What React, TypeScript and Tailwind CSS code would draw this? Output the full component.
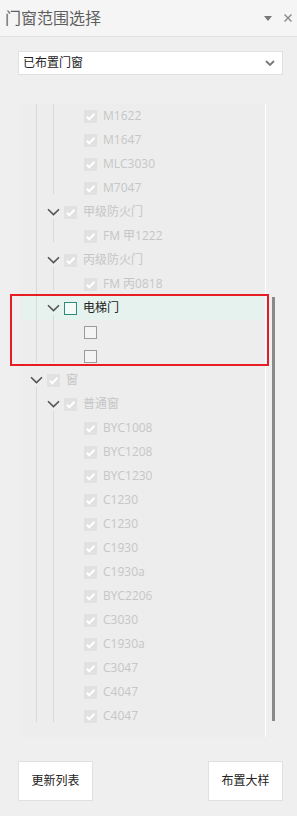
import React from "react";

type Item = { label: string; checked?: boolean };

const Chevron = () => (
  <svg width="13" height="8" viewBox="0 0 13 8" className="shrink-0">
    <path d="M1 1.2 L6.5 6.6 L12 1.2" fill="none" stroke="#555" strokeWidth="1.6" />
  </svg>
);

const Check = ({ state }: { state: "done" | "empty" | "active" }) => {
  if (state === "done")
    return (
      <span className="w-[13px] h-[13px] bg-[#e1e1e1] flex items-center justify-center shrink-0">
        <svg width="13" height="13" viewBox="0 0 13 13">
          <path d="M2.8 6.8 L5.3 9.3 L10.4 3.8" fill="none" stroke="#fff" strokeWidth="2" />
        </svg>
      </span>
    );
  if (state === "active")
    return <span className="block w-[13px] h-[13px] border border-[#2b8c7c] bg-[#f4faf8] shrink-0" />;
  return <span className="block w-[13px] h-[13px] border border-[#9a9a9a] bg-[#f4f4f4] shrink-0" />;
};

const Leaf = ({ item }: { item: Item }) => (
  <div className="h-6 flex items-center pl-[62px]">
    <Check state={item.checked === false ? "empty" : "done"} />
    <span className="ml-[6px] text-[12px] text-[#c6c6c6]">{item.label}</span>
  </div>
);

const Node = ({
  label,
  level,
  active,
}: {
  label: string;
  level: 1 | 2;
  active?: boolean;
}) => (
  <div
    className={`h-6 flex items-center ${level === 1 ? "pl-[8px]" : "pl-[25px]"} ${
      active ? "bg-[#e6f2ee]" : ""
    }`}
  >
    <Chevron />
    <span className="ml-[4px] flex">
      <Check state={active ? "active" : "done"} />
    </span>
    <span
      className={`ml-[6px] text-[12px] ${active ? "text-[#222]" : "text-[#c6c6c6]"}`}
    >
      {label}
    </span>
  </div>
);

const Group = ({ x, children }: { x: number; children: React.ReactNode }) => (
  <div className="relative">
    {children}
    <span
      className={`absolute top-[-5px] bottom-[6px] w-px bg-[#d9d9d9] ${
        x === 14 ? "left-[14px]" : "left-[31px]"
      }`}
    />
  </div>
);

const mItems: Item[] = [
  { label: "M1622" },
  { label: "M1647" },
  { label: "MLC3030" },
  { label: "M7047" },
];

const windows: Item[] = [
  "BYC1008",
  "BYC1208",
  "BYC1230",
  "C1230",
  "C1230",
  "C1930",
  "C1930a",
  "BYC2206",
  "C3030",
  "C1930a",
  "C3047",
  "C4047",
  "C4047",
].map((label) => ({ label }));

export default function App() {
  return (
    <div
      className="relative w-[297px] h-[816px] bg-[#efefef] overflow-hidden"
      style={{ fontFamily: '"Open Sans", "Noto Sans CJK SC", sans-serif' }}
    >
      <div className="h-[37px] bg-[#f5f5f5] border-b border-[#e1e1e1] flex items-center pl-[5px] pr-[5px]">
        <span className="text-[16px] text-[#5e5e5e] leading-none">门窗范围选择</span>
        <div className="ml-auto flex items-center gap-[12px]">
          <svg width="8" height="5" viewBox="0 0 8 5">
            <path d="M0 0 H8 L4 5 Z" fill="#777" />
          </svg>
          <svg width="8" height="8" viewBox="0 0 8 8">
            <path d="M0.5 0.5 L7.5 7.5 M7.5 0.5 L0.5 7.5" stroke="#888" strokeWidth="1.4" />
          </svg>
        </div>
      </div>

      <div className="pl-[18px] pr-[14px]">
        <div className="mt-[14px] h-6 bg-white border border-[#e0e0e0] flex items-center pl-[4px] pr-[7px]">
          <span className="text-[12px] text-[#222]">已布置门窗</span>
          <svg className="ml-auto" width="10" height="6" viewBox="0 0 10 6">
            <path d="M1 1 L5 5 L9 1" fill="none" stroke="#777" strokeWidth="1.8" />
          </svg>
        </div>

        <div className="mt-[29px] flex">
          <div className="ml-[2px] w-[246px] h-[633px] bg-[#ededed] border-r border-white pl-[2px] overflow-hidden">
            <Group x={14}>
              <Group x={31}>
                {mItems.map((it, i) => (
                  <Leaf key={i} item={it} />
                ))}
              </Group>
              <Node label="甲级防火门" level={2} />
              <Group x={31}>
                <Leaf item={{ label: "FM 甲1222" }} />
              </Group>
              <Node label="丙级防火门" level={2} />
              <Group x={31}>
                <Leaf item={{ label: "FM 丙0818" }} />
              </Group>
              <Node label="电梯门" level={2} active />
              <Group x={31}>
                <Leaf item={{ label: "", checked: false }} />
                <Leaf item={{ label: "", checked: false }} />
              </Group>
            </Group>
            <Node label="窗" level={1} />
            <Group x={14}>
              <Node label="普通窗" level={2} />
              <Group x={31}>
                {windows.map((it, i) => (
                  <Leaf key={i} item={it} />
                ))}
              </Group>
            </Group>
          </div>
          <div className="ml-[6px] pt-[193px]">
            <div className="w-[3px] h-[424px] bg-[#8a8a8a]" />
          </div>
        </div>

        <div className="mt-[24px] flex justify-between">
          <button className="w-[75px] h-[40px] bg-white border border-[#e0e0e0] text-[12px] text-[#222]">
            更新列表
          </button>
          <button className="w-[75px] h-[40px] bg-white border border-[#e0e0e0] text-[12px] text-[#222]">
            布置大样
          </button>
        </div>
      </div>

      <div className="absolute left-[10px] top-[294px] w-[259px] h-[72px] border-2 border-[#e81c24]" />
    </div>
  );
}
